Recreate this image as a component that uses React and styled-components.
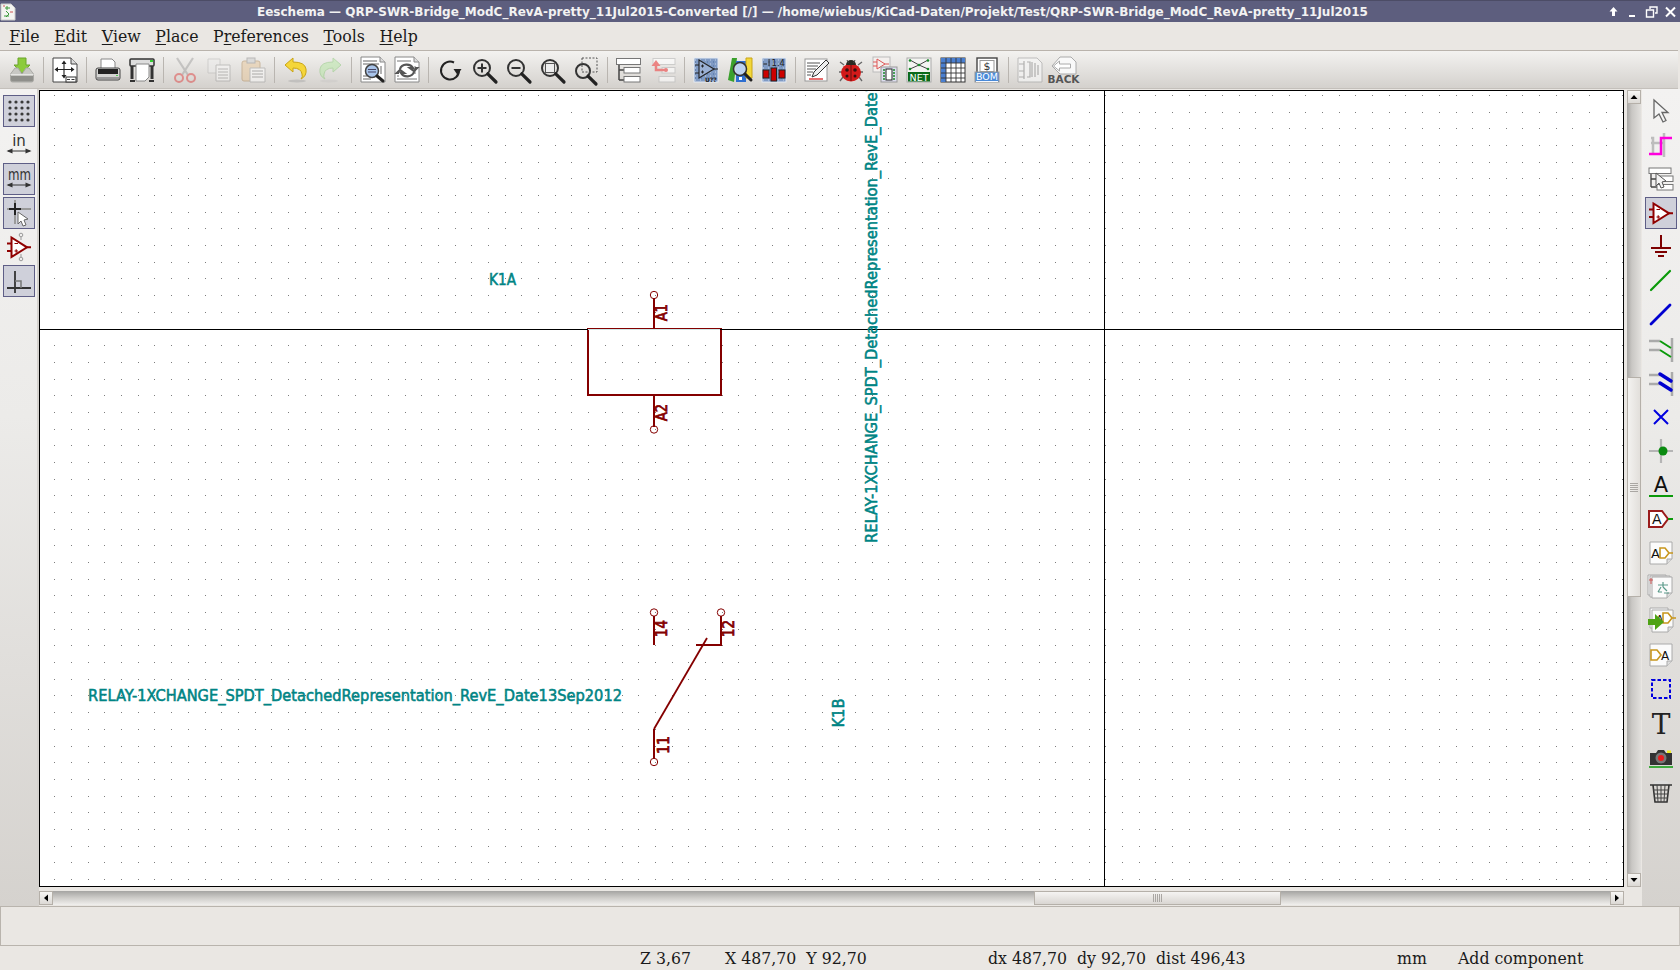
import React from "react";
import styled, { createGlobalStyle } from "styled-components";

const Global = createGlobalStyle`
  html, body { margin: 0; padding: 0; background: #eae7e3; overflow: hidden; }
  #root { width: 1680px; height: 970px; }
`;

const Win = styled.div`
  width: 1680px; height: 970px; display: flex; flex-direction: column;
  background: #eae7e3; overflow: hidden;
`;
const TitleBar = styled.div`
  height: 22px; flex: none; display: flex; align-items: center; background: #5d5e7e;
  border-top: 1px solid #4c4c66; box-sizing: border-box;
`;
const TitleIcon = styled.svg`width: 16px; height: 18px; flex: none; margin-left: 0;`;
const TitleText = styled.div`
  margin-left: 241px; font: bold 12px "DejaVu Sans", sans-serif; color: #f2f2f2;
  white-space: nowrap; flex: 1; letter-spacing: 0;
`;
const WinButtons = styled.div`display: flex; gap: 2px; padding-right: 1px;`;
const WinBtn = styled.svg`width: 17px; height: 16px; display: block;`;
const MenuBar = styled.div`
  height: 28px; flex: none; display: flex; align-items: center; padding-left: 2px; background: #eae7e3;
`;
const MenuItem = styled.span`
  padding: 0 7.3px; font: 15.75px "DejaVu Serif", serif; color: #1a1a1a;
  u { text-decoration-thickness: 1px; text-underline-offset: 2px; }
`;
const TopBar = styled.div`
  height: 39px; flex: none; box-sizing: border-box; display: flex; align-items: center; padding: 0 0 0 5px;
  margin-right: 2px; background: linear-gradient(#f3f2f0, #d4d1cd);
  border-top: 1px solid #b9b3ac; border-bottom: 1px solid #c4c0bb;
`;
const TopBtn = styled.div`width: 34px; height: 30px; display: flex; align-items: center; justify-content: center; flex: none;`;
const Sep = styled.div`
  width: 1px; height: 26px; flex: none; margin: 0 4px; background: #b9b5b0;
`;
const Icon = styled.svg`width: ${p => p.$s || 26}px; height: ${p => p.$s || 26}px; display: block; overflow: visible;`;
const Main = styled.div`flex: none; height: 817px; display: flex;`;
const SideBar = styled.div`
  flex: none; width: ${p => p.$w}px; box-sizing: border-box; display: flex; flex-direction: column; align-items: ${p => p.$right ? "flex-end" : "flex-start"};
  gap: 2px; padding: ${p => p.$right ? "6px 3px 0 0" : "6px 0 0 3px"};
  background: linear-gradient(#f3f2f1, #ecebe9 40%, #d5d2ce);
`;
const SideBtn = styled.div`
  width: 32px; height: 32px; box-sizing: border-box; flex: none; display: flex; align-items: center; justify-content: center;
  border: 1px solid ${p => p.$on ? "#5e5e86" : "transparent"};
  background: ${p => p.$on ? "#cfd0da" : "transparent"};
`;
const Center = styled.div`
  flex: 1; min-width: 0; box-sizing: border-box; padding: 1px 1px 1px 2px; display: grid;
  grid-template-columns: 1fr 14px; grid-template-rows: 1fr 14px; column-gap: 3px; row-gap: 4px;
  background: linear-gradient(to right, #d5d2ce 2px, #eae7e3 2px);
`;
const Canvas = styled.div`border: 1px solid #000; background: #fff; overflow: hidden; display: flex;`;
const Sheet = styled.svg`display: block; flex: none;`;
const SchText = styled.text`
  font-family: "DejaVu Sans", sans-serif; font-size: ${p => p.$size || 15}px;
  fill: ${p => p.$c}; stroke: ${p => p.$c}; stroke-width: ${p => p.$sw || 0.55}px;
`;
const VScroll = styled.div`
  position: relative; background: linear-gradient(to right, #a8a6a3, #c9c7c4 35%, #e2e0dd);
  display: flex; flex-direction: column; justify-content: space-between;
`;
const HScroll = styled.div`
  position: relative; background: linear-gradient(#a5a4a2, #cfcdca 50%, #f0efed);
  display: flex; justify-content: space-between; margin-right: 0;
`;
const ArrowBtn = styled.div`
  width: 14px; height: 14px; box-sizing: border-box; border: 1px solid #b5b0a9; background: linear-gradient(#f7f6f4, #dcd9d5);
  display: flex; align-items: center; justify-content: center; position: relative; z-index: 1;
`;
const Tri = styled.svg`width: 8px; height: 8px; display: block;`;
const Thumb = styled.div`
  position: absolute; box-sizing: border-box; border: 1px solid #b5b0a9;
  display: flex; align-items: center; justify-content: center;
  ${p => p.$v
    ? `left: 0; right: 0; top: 287px; height: 220px; background: linear-gradient(to right, #f3f2f0, #e2dfdb);`
    : `top: 0; bottom: 0; left: 995px; width: 247px; background: linear-gradient(#f5f4f2, #d9d6d2);`}
`;
const Grip = styled.div`
  ${p => p.$v
    ? `width: 8px; height: 9px; background: repeating-linear-gradient(#aaa7a3 0 1px, transparent 1px 2px);`
    : `width: 9px; height: 8px; background: repeating-linear-gradient(to right, #aaa7a3 0 1px, transparent 1px 2px);`}
`;
const Message = styled.div`
  height: 40px; flex: none; box-sizing: border-box; border: 1px solid #b9b4ad; border-right-color: #c8c4be; background: #eae7e3;
`;
const Status = styled.div`
  flex: 1; display: grid; align-items: center; grid-template-columns: 640px 85px 263px 409px 61px 1fr;
  font: 17.5px "DejaVu Serif Condensed", "DejaVu Serif", serif; font-stretch: condensed; color: #1a1a1a; white-space: nowrap;
`;
const Cell = styled.span`display: block;`;
const IconLabel = styled.text`
  font-family: ${p => p.$font || '"DejaVu Sans"'}, sans-serif; font-size: ${p => p.$size}px; font-weight: ${p => p.$w || 400}; fill: ${p => p.$c || "#333"};
`;

const I = ({ children, s }) => <Icon $s={s} viewBox="0 0 26 26">{children}</Icon>;

const Doc = ({ x = 2, y = 1, w = 22, h = 24, f = 5, stroke = "#888" }) => (
  <g>
    <path d={`M${x} ${y}H${x + w - f}L${x + w} ${y + f}V${y + h}H${x}Z`} fill="#fff" stroke={stroke} />
    <path d={`M${x + w - f} ${y}V${y + f}H${x + w}`} fill="#ddd" stroke={stroke} />
  </g>
);
const Mag = ({ cx = 11, cy = 11, r = 8 }) => (
  <g fill="none">
    <circle cx={cx} cy={cy} r={r} stroke="#333" strokeWidth="2" />
    <path d={`M${cx + r * 0.72} ${cy + r * 0.72}L${cx + r + 6} ${cy + r + 6}`} stroke="#222" strokeWidth="3.2" strokeLinecap="round" />
  </g>
);
const Amp = ({ c = "#900000", fill = "#fff", op = 1 }) => (
  <g opacity={op}>
    <path d="M1 9.5H6M1 17H6M20 13.3H25" stroke={c} strokeWidth="2" />
    <path d="M5.5 3.5V23L21 13.3Z" fill={fill} stroke={c} strokeWidth="2" />
    <path d="M8.5 9.5H12M8.5 17H12M10.2 15.2V18.8" stroke={c} strokeWidth="1.1" fill="none" />
  </g>
);
const Speckle = () => (
  <g>
    <rect x="1" y="1" width="24" height="24" fill="#7f9ac4" stroke="#e6ebf4" />
    <path d="M2 3h22M2 7h22M2 11h22M2 15h22M2 19h22M2 23h22" stroke="#c9d5e8" strokeDasharray="1 4" />
    <path d="M2 5h22M2 9h22M2 13h22M2 17h22M2 21h22" stroke="#4f6c9c" strokeDasharray="1 5" />
  </g>
);

const topIcons = {
  load: <I><path d="M9 1h8v7h4l-8 8-8-8h4z" fill="#8ccb3c" stroke="#6aa52a" /><path d="M1.5 17L6 11H9l4 6 4-6h3l4.5 6v6q0 2-2 2h-19q-2 0-2-2z" fill="#c8c8c4" stroke="#a9a9a5" /><path d="M2 19h22v4q0 1.500-1.500 1.500h-19Q2 24.500 2 23z" fill="#8f8f8b" /><path d="M1.500 17.500h23" stroke="#e6e6e4" /></I>,
  page: <I><Doc x={1} y={1} w={24} h={24} f={6} stroke="#444" /><path d="M12 5V20M4 12.500H21" stroke="#222" strokeWidth="1.100" /><path d="M12 3.500l-2.500 3.500h5zM12 21.500l-2.500-3.500h5zM2.500 12.500l3.500-2.500v5zM22.500 12.500l-3.500-2.500v5z" fill="#222" /><rect x="14" y="20" width="10" height="5" fill="#fff" stroke="#333" /><path d="M15 22.500h3M19.500 22.500h3" stroke="#333" /></I>,
  print: <I><path d="M6 2h11l3 3v8H6z" fill="#fff" stroke="#888" /><path d="M1 13q0-2 2-2h20q2 0 2 2v8q0 2-2 2H3q-2 0-2-2z" fill="#d4d4d2" stroke="#444" /><rect x="3" y="12" width="20" height="5" fill="#222" /><rect x="2" y="20" width="22" height="2" fill="#999" /><rect x="21" y="18" width="2" height="1" fill="#5c5" /></I>,
  plot: <I><rect x="1" y="2" width="24" height="7" rx="1" fill="#ddd" stroke="#333" strokeWidth="1.500" /><path d="M7 7h13v13l-4 4H7z" fill="#fff" stroke="#888" /><path d="M3 9v13M23 9v13" stroke="#333" strokeWidth="3" /><path d="M1 24h5M20 24h5" stroke="#333" strokeWidth="2" /><rect x="21" y="3" width="3" height="2" fill="#3c3" /></I>,
  cut: <I><g opacity="0.45"><path d="M5 1L16 18M21 1L10 18" stroke="#999" strokeWidth="2.200" /><circle cx="7" cy="21" r="4" fill="none" stroke="#d33" strokeWidth="2" /><circle cx="19" cy="21" r="4" fill="none" stroke="#d33" strokeWidth="2" /></g></I>,
  copy: <I><g opacity="0.4"><path d="M2 2h12v14H2z" fill="#eee" stroke="#aaa" /><path d="M10 8h14v16H10z" fill="#fff" stroke="#888" /><path d="M12 12h10M12 15h10M12 18h10M12 21h10" stroke="#777" /></g></I>,
  paste: <I><g opacity="0.5"><rect x="2" y="4" width="18" height="20" rx="2" fill="#e8c79a" stroke="#b08a5a" /><rect x="7" y="1" width="8" height="5" fill="#ccc" stroke="#888" /><path d="M10 11h15v14H10z" fill="#fff" stroke="#999" /><path d="M12 14h11M12 17h11M12 20h11" stroke="#777" /></g></I>,
  undo: <I><ellipse cx="14" cy="24" rx="9" ry="1.500" fill="#aaa" opacity=".5" /><path d="M10 1L2 8l8 7v-4q8 0 9 6 1 3-1 5 6-3 5-10-1-7-13-7z" fill="#f5d63a" stroke="#c9a516" /></I>,
  redo: <I><g opacity="0.5"><ellipse cx="12" cy="24" rx="9" ry="1.500" fill="#bbb" opacity=".5" /><path d="M16 1l8 7-8 7v-4q-8 0-9 6-1 3 1 5-6-3-5-10 1-7 13-7z" fill="#b6e8a4" stroke="#8ac878" /></g></I>,
  find: <I><Doc x={1} y={0} w={24} h={25} f={5} /><path d="M3 4h14M3 7h16M3 19h4M3 22h8M21 9v8" stroke="#666" /><circle cx="12" cy="14" r="6.500" fill="#a8c4ea" stroke="#444" strokeWidth="1.500" /><path d="M8 12.500h8M8 15h8" stroke="#446" /><path d="M17 19l6 5" stroke="#222" strokeWidth="3" strokeLinecap="round" /></I>,
  repl: <I><Doc x={1} y={0} w={24} h={25} f={5} /><path d="M3 4h14M3 22h20M3 19h2M21 9v8" stroke="#777" /><path d="M6 12a7 6 0 0 1 13-1l-3 0 4 3 3-3h-2" fill="none" stroke="#555" strokeWidth="2.200" /><path d="M20 15a7 6 0 0 1-13 1l3 0-4-3-3 3h2" fill="none" stroke="#555" strokeWidth="2.200" /></I>,
  redraw: <I><path d="M17 5.500A9 9 0 1 0 22 13" fill="none" stroke="#222" strokeWidth="2" /><path d="M17.500 13h8l-4 6z" fill="#222" transform="translate(-1 -1)" /></I>,
  zin: <I><Mag /><path d="M6.500 11h9M11 6.500v9" stroke="#333" strokeWidth="2" /></I>,
  zout: <I><Mag /><path d="M6.500 11h9" stroke="#333" strokeWidth="2" /></I>,
  zfit: <I><Mag /><rect x="6.500" y="6.500" width="9" height="9" fill="#eee" stroke="#555" /></I>,
  zsel: <I><Mag cx={10} cy={14} r={7} /><rect x="9" y="1" width="15" height="14" fill="none" stroke="#555" strokeDasharray="2 1.500" /></I>,
  hier: <I><path d="M3 6v17M3 13h5M3 23h5" fill="none" stroke="#444" strokeWidth="1.500" /><rect x="0.500" y="1.500" width="24" height="6" fill="#fff" stroke="#777" /><rect x="8" y="10.500" width="16" height="5.500" fill="#fff" stroke="#777" /><rect x="8" y="19.500" width="16" height="5.500" fill="#fff" stroke="#777" /></I>,
  leave: <I><g opacity="0.6"><rect x="3" y="1.500" width="22" height="6" fill="#fff" stroke="#bbb" /><rect x="12" y="10.500" width="13" height="5.500" fill="#fff" stroke="#bbb" /><rect x="9" y="19.500" width="16" height="5.500" fill="#fff" stroke="#bbb" /><path d="M6 8v5h10" fill="none" stroke="#e44" strokeWidth="2.500" /><path d="M6 3l-4.500 6h9z" fill="#e44" /><circle cx="16" cy="13" r="2" fill="#e44" /></g></I>,
  lib: <I><Speckle /><path d="M6 3v18l15-9z" fill="#9ab0d4" stroke="#222" strokeWidth="1.100" /><path d="M8 9h3M8 15h3M9.500 13.500v3M9.500 7.500v3M2 8h4M2 16h4M21 12h4" stroke="#222" fill="none" /><IconLabel x="12" y="24.500" $size="6" $w="700" $c="#222">U??</IconLabel></I>,
  libv: <I><path d="M1 23L5 1h5L7 25z" fill="#3aa02c" /><path d="M9 4h10v21H9z" fill="#2f6fd0" /><path d="M19 1h6v20h-6z" fill="#f2d73a" stroke="#c9a516" /><circle cx="13" cy="12" r="6.500" fill="#d6e4f4" fillOpacity=".85" stroke="#333" strokeWidth="1.500" /><path d="M18 17l6 6" stroke="#222" strokeWidth="3" strokeLinecap="round" /><rect x="12" y="20" width="3" height="3" fill="#fff" /></I>,
  mod: <I><Speckle /><rect x="2" y="13" width="6" height="8" fill="#c00" stroke="#222" /><rect x="10" y="11" width="5.500" height="13" fill="#c00" stroke="#222" /><rect x="18" y="13" width="6" height="8" fill="#c00" stroke="#222" /><path d="M2 7h4M8 2v7" stroke="#222" /><IconLabel x="10.500" y="9" $size="8.500" $c="#222">1.4</IconLabel></I>,
  edit: <I><rect x="1" y="2" width="22" height="22" fill="#fff" stroke="#999" /><path d="M3 6h13M3 9h11M3 12h9M3 15h6M3 18h4" stroke="#555" /><path d="M22 3l3 3-12 12-5 2 2-5z" fill="#eee" stroke="#333" /><path d="M5 22h14" stroke="#d22" strokeWidth="1.300" /></I>,
  bug: <I><path d="M6 8L2 5M20 8l4-3M4 15H1M22 15h3M5 20l-3 4M21 20l3 4" stroke="#666" strokeWidth="1.300" /><ellipse cx="13" cy="15.500" rx="10" ry="9" fill="#d21a1a" /><path d="M8 8a5 5 0 0 1 10 0z" fill="#2a2a22" /><path d="M9 3l1.500 3M17 3l-1.500 3" stroke="#444" /><path d="M13 8v16" stroke="#611" /><circle cx="9" cy="13" r="1.800" fill="#311" /><circle cx="17" cy="13" r="1.800" fill="#311" /><circle cx="9" cy="19" r="1.500" fill="#311" /><circle cx="17" cy="19" r="1.500" fill="#311" /></I>,
  cvpcb: <I><rect x="1" y="0" width="17" height="15" fill="#f4f0ee" stroke="#bbb" /><path d="M5 2v10l8-5zM1 5h4M1 9h4M13 7h4" fill="none" stroke="#d55" /><rect x="9" y="10" width="16" height="15" fill="#dde" stroke="#999" /><rect x="14" y="12" width="6" height="11" fill="#fff" stroke="#222" /><path d="M11 13h2M11 16h2M11 19h2M11 22h2M21 13h2M21 16h2M21 19h2M21 22h2" stroke="#1a8a2a" strokeWidth="1.500" /></I>,
  net: <I><rect x="1" y="1" width="24" height="24" fill="#f4f4f2" stroke="#aaa" /><path d="M4 3l9 5 9-5M4 12l9-4 9 4" fill="none" stroke="#444" /><circle cx="4" cy="3.500" r="1.300" fill="#1a8a2a" /><circle cx="22" cy="3.500" r="1.300" fill="#1a8a2a" /><circle cx="13" cy="8" r="1.300" fill="#1a8a2a" /><circle cx="4" cy="12" r="1.300" fill="#1a8a2a" /><circle cx="22" cy="12" r="1.300" fill="#1a8a2a" /><rect x="2" y="15" width="22" height="9.500" fill="#0b6a1a" /><IconLabel x="13" y="23.500" textAnchor="middle" $size="9.500" $w="400" $c="#fff">NET</IconLabel></I>,
  table: <I><rect x="1" y="1" width="24" height="24" fill="#fff" stroke="#333" /><path d="M1 1h24v5H1zM1 1h5v24H1z" fill="#4a7fd0" /><path d="M1 6h24M1 11h24M1 16h24M1 21h24M6 1v24M11 1v24M16 1v24M21 1v24" stroke="#333" strokeWidth="0.900" /></I>,
  bom: <I><rect x="3" y="1" width="20" height="15" fill="#fff" stroke="#444" strokeWidth="1.400" /><rect x="6" y="3.500" width="14" height="11" fill="none" stroke="#999" /><IconLabel x="13" y="13" textAnchor="middle" $size="11" $c="#333">$</IconLabel><rect x="1" y="15" width="24" height="10" fill="#4a8ad8" stroke="#999" /><IconLabel x="13" y="23" textAnchor="middle" $size="9.500" $c="#fff" textDecoration="underline">BOM</IconLabel></I>,
  imp: <I><g opacity="0.7"><path d="M1 1h19l5 5v19H1z" fill="#f6f6f6" stroke="#aaa" /><path d="M7 4v18M10 5h3v15h-3M15 5v15M18 6v14M21 8v10M2 7h5M2 14h5M2 20h5" stroke="#999" fill="none" strokeWidth="1.200" /></g></I>,
  back: <I><path d="M9 0h11l5 5v12H9l-8-8z" fill="#f9f9f9" stroke="#aaa" /><path d="M2.500 9l6-5v3h11v4h-11v3z" fill="#fff" stroke="#aaa" /><IconLabel x="12.500" y="26" textAnchor="middle" $size="10.500" $w="700" $c="#555">BACK</IconLabel></I>,
};

const topLayout = [
  ["load"], 0, ["page"], 0, ["print"], ["plot"], 0, ["cut"], ["copy"], ["paste"], 0, ["undo"], ["redo"], 0,
  ["find"], ["repl"], 0, ["redraw"], ["zin"], ["zout"], ["zfit"], ["zsel"], 0, ["hier"], ["leave"], 0,
  ["lib"], ["libv"], ["mod"], 0, ["edit"], ["bug"], ["cvpcb"], ["net"], ["table"], ["bom"], 0, ["imp"], ["back"],
];

const leftIcons = [
  { on: true, el: <I>{[3, 9, 15, 21].flatMap(y => [4, 10, 16, 22].map(x => <circle key={x + "-" + y} cx={x} cy={y + 1} r="1.600" fill="#3a3a3a" />))}</I> },
  { el: <I><IconLabel x="13" y="14" textAnchor="middle" $size="15" $c="#333">in</IconLabel><path d="M2 19h22" stroke="#333" /><path d="M0.500 19l6-2.500v5zM25.500 19l-6-2.500v5z" fill="#333" /></I> },
  { on: true, el: <I><IconLabel x="2" y="14" textLength="23" lengthAdjust="spacingAndGlyphs" $size="15" $c="#333">mm</IconLabel><path d="M2 19h22" stroke="#333" /><path d="M0.500 19l6-2.500v5zM25.500 19l-6-2.500v5z" fill="#333" /></I> },
  { on: true, el: <I><path d="M1 9h24M9 0v24" stroke="#9a9a9a" strokeWidth="2" /><path d="M3 9h12M9 3v12" stroke="#222" strokeWidth="2" /><path d="M12 12v12l3-3 2 5 3-1-2-5 4-1z" fill="#fff" stroke="#666" /></I> },
  { el: <I><circle cx="15" cy="1" r="1.800" fill="none" stroke="#999" /><circle cx="15" cy="25" r="1.800" fill="none" stroke="#999" /><path d="M15 3v3M15 20v3" stroke="#999" /><Amp /></I> },
  { on: true, el: <I><path d="M1 20h24M9 3v22" stroke="#333" strokeWidth="1.800" /><path d="M9 13h6v7" fill="none" stroke="#777" strokeWidth="1.500" /></I> },
];

const label = (x, ch, c = "#222", y = 18, fs = 13) => <IconLabel x={x} y={y} $size={fs} $c={c}>{ch}</IconLabel>;
const Leaf = ({ x = 2, y = 2, w = 22, h = 22 }) => (
  <g><path d={`M${x} ${y}H${x + w}V${y + h - 5}L${x + w - 5} ${y + h}H${x}Z`} fill="#fbfbfb" stroke="#aaa" /><path d={`M${x + w} ${y + h - 5}H${x + w - 5}V${y + h}`} fill="#ddd" stroke="#aaa" /></g>
);
const Dee = ({ x = 12, y = 8 }) => <path d={`M${x} ${y}h5l4 5-4 5h-5zM${x + 9} ${y + 5}h4`} fill="#fff" stroke="#c8961e" strokeWidth="1.600" />;

const rightIcons = [
  { el: <I><path d="M6 2v18l5-4 4 8 3-1.500-4-8h6z" fill="#f4f4f4" stroke="#666" strokeWidth="1.300" /></I> },
  { el: <I><path d="M3 6h2v16M16 1v24M3 11h12" stroke="#bdbdbd" strokeWidth="2.500" fill="none" /><path d="M24 6H13v16H1" fill="none" stroke="#ff00dd" strokeWidth="2.500" /></I> },
  { el: <I><path d="M3 6v15M3 13h6M3 21h6" fill="none" stroke="#444" strokeWidth="1.300" /><rect x="1" y="2" width="22" height="5.500" fill="#fff" stroke="#777" /><rect x="9" y="10" width="16" height="5.500" fill="#fff" stroke="#777" /><rect x="9" y="18.500" width="16" height="5.500" fill="#fff" stroke="#777" /><path d="M8 7v13l3-3 2 5 3-1-2-5 4-1z" fill="#f4f4f4" stroke="#555" /></I> },
  { on: true, el: <I><Amp /></I> },
  { el: <I><path d="M13 1v13M3 14h20M7 18h12M10 22h6" stroke="#7d0000" strokeWidth="2" /></I> },
  { el: <I><path d="M3 22L22 3" stroke="#0a9a0a" strokeWidth="2.200" strokeLinecap="round" /></I> },
  { el: <I><path d="M3 22L22 3" stroke="#0000d0" strokeWidth="2.800" strokeLinecap="round" /></I> },
  { el: <I><path d="M1 5h11M1 14h11M24 2v24" stroke="#aaa" strokeWidth="2.500" /><path d="M12 5l11 7M12 14l11 7" stroke="#0a9a0a" strokeWidth="2" /></I> },
  { el: <I><path d="M1 5h11M1 14h11M24 2v24" stroke="#aaa" strokeWidth="2.500" /><path d="M12 4l11 7M12 13l11 7" stroke="#0000d0" strokeWidth="3.500" strokeLinecap="round" /></I> },
  { el: <I><path d="M6 6l14 14M20 6L6 20" stroke="#0000e0" strokeWidth="2" /></I> },
  { el: <I><path d="M1 13h24M13 1v24" stroke="#b5b5b5" strokeWidth="2.200" /><circle cx="15" cy="13" r="4.500" fill="#0a8a10" /></I> },
  { el: <I><IconLabel x="13" y="20" textAnchor="middle" $size="21" $c="#111">A</IconLabel><path d="M1 24h24" stroke="#0a9a0a" strokeWidth="2" /></I> },
  { el: <I><path d="M1 5h13l6 8-6 8H1z" fill="#fff" stroke="#9a1c1c" strokeWidth="2" /><path d="M20 13h5" stroke="#0a9a0a" strokeWidth="2" />{label(4, "A", "#111", 18, 14)}</I> },
  { el: <I><Leaf />{label(3, "A", "#111", 18, 13)}<Dee /></I> },
  { el: <I><Leaf x={0} y={1} w={18} h={20} /><Leaf x={2} y={2} w={20} h={21} /><Leaf x={4} y={3} w={20} h={21} /><path d="M1 6h4M3 4v6" stroke="#c55" /><path d="M15 8v5M10 11h10M13 13l-3 5M15 13l4 4M10 18h4M16 19h5" stroke="#5a9a8a" strokeWidth="1.200" /></I> },
  { el: <I><Leaf x={2} y={0} w={18} h={20} /><Leaf x={4} y={2} w={21} h={22} />{label(8, "A", "#111", 15, 11)}<Dee x={15} y={5} /><path d="M0 11h7V6l9 8-9 8v-5H0z" fill="#4ea214" /></I> },
  { el: <I><Leaf /><path d="M3 8h6l4 5-4 5H3z" fill="#fff" stroke="#c8961e" strokeWidth="1.600" />{label(13, "A", "#111", 18, 12)}</I> },
  { el: <I><rect x="4" y="4" width="18" height="18" fill="none" stroke="#0000e0" strokeWidth="2" strokeDasharray="3.500 2" /></I> },
  { el: <I><IconLabel x="13" y="24" textAnchor="middle" $size="28" $w="400" $c="#222" $font='"DejaVu Serif"'>T</IconLabel></I> },
  { el: <I><path d="M2 9h6l2-3h6l2 3h6v12H2z" fill="#333" /><rect x="19" y="6.500" width="4" height="2.500" fill="#ee2" /><circle cx="13" cy="14" r="5.500" fill="#777" /><circle cx="13" cy="14" r="3" fill="#e81c1c" /><path d="M1 23h24" stroke="#0a9a0a" strokeWidth="1.500" /></I> },
  { el: <I><ellipse cx="13" cy="4.500" rx="8" ry="2" fill="#ddd" /><path d="M2 7h22M5 7l2 17h12l2-17" fill="none" stroke="#333" strokeWidth="1.600" /><path d="M9 7l1 17M13 7v17M17 7l-1 17M5 12h16M6 16h14M6 20h14" stroke="#444" /></I> },
];

function gridPath() {
  let d = "";
  for (let i = 0; i < 96; i++) {
    const x = Math.round(54.4 + 16.68 * i);
    for (let j = 0; j < 48; j++) {
      const y = Math.round(95 + 16.68 * j);
      d += `M${x} ${y}h1v1h-1z`;
    }
  }
  return d;
}
const GRID = gridPath();
const TEAL = "#008484";
const RED = "#840000";
const LONG = "RELAY-1XCHANGE_SPDT_DetachedRepresentation_RevE_Date13Sep2012";

const PinText = ({ x, y, len, children }) => (
  <SchText $c={RED} $sw={0.8} x={x} y={y} textLength={len} lengthAdjust="spacingAndGlyphs" transform={`rotate(-90 ${x} ${y})`}>{children}</SchText>
);

function Schematic() {
  return (
    <Sheet width="1583" height="795" viewBox="40 91 1583 795">
      <path d={GRID} fill="#7d7d7d" shapeRendering="crispEdges" />
      <g shapeRendering="crispEdges">
        <path d="M40 329.500H1623M1104.500 91V886" stroke="#000" strokeWidth="1" />
        <path d="M587.500 329.500H720" stroke="#cfe8e8" strokeWidth="1" />
        <g fill="none" stroke={RED} strokeWidth="2">
          <path d="M587.500 330V395H720.500V330" />
          <path d="M654 298V328M654 396V427" />
          <path d="M654 616V645M721 616V645H696M654 729V758" />
        </g>
        <path d="M586.500 328.500H721.500" stroke={RED} strokeWidth="1.500" />
      </g>
      <path d="M654 729L707 638" stroke={RED} strokeWidth="1.800" fill="none" />
      <g fill="none" stroke={RED} strokeWidth="1">
        <circle cx="654" cy="295" r="3.700" />
        <circle cx="654" cy="429.500" r="3.700" />
        <circle cx="654" cy="612.500" r="3.700" />
        <circle cx="721" cy="612.500" r="3.700" />
        <circle cx="654" cy="762" r="3.700" />
      </g>
      <PinText x="666.500" y="321" len="17">A1</PinText>
      <PinText x="666.500" y="421" len="17">A2</PinText>
      <PinText x="666.500" y="637" len="17">14</PinText>
      <PinText x="734" y="637" len="17">12</PinText>
      <PinText x="668.500" y="754" len="18">11</PinText>
      <SchText $c={TEAL} x="489" y="285" textLength="27" lengthAdjust="spacingAndGlyphs">K1A</SchText>
      <SchText $c={TEAL} x="844" y="727.500" textLength="29" lengthAdjust="spacingAndGlyphs" transform="rotate(-90 844 727.500)">K1B</SchText>
      <SchText $c={TEAL} x="88" y="701" textLength="534" lengthAdjust="spacingAndGlyphs">{LONG}</SchText>
      <SchText $c={TEAL} x="876.500" y="543" textLength="534" lengthAdjust="spacingAndGlyphs" transform="rotate(-90 876.500 543)">{LONG}</SchText>
    </Sheet>
  );
}

const menus = [["F", "ile"], ["E", "dit"], ["V", "iew"], ["P", "lace"], ["P", "r", "eferences"], ["T", "ools"], ["H", "elp"]];

export default function App() {
  return (
    <Win>
      <Global />
      <TitleBar>
        <TitleIcon viewBox="0 0 16 18">
          <path d="M1 1h10l4 4v12H1z" fill="#f4f4f0" stroke="#ccc" />
          <path d="M7 3v4M5 5h5M6 8l3 3-3 3M4 13h5" stroke="#3a9a3a" fill="none" />
          <path d="M3 3h2M10 9h3" stroke="#c55" />
        </TitleIcon>
        <TitleText>Eeschema — QRP-SWR-Bridge_ModC_RevA-pretty_11Jul2015-Converted [/] — /home/wiebus/KiCad-Daten/Projekt/Test/QRP-SWR-Bridge_ModC_RevA-pretty_11Jul2015</TitleText>
        <WinButtons>
          <WinBtn viewBox="0 0 17 16"><path d="M8.500 3l4 4.500h-2.500V12H7V7.500H4.500z" fill="#fff" /></WinBtn>
          <WinBtn viewBox="0 0 17 16"><path d="M5 11h6v2H5z" fill="#fff" /></WinBtn>
          <WinBtn viewBox="0 0 17 16"><path d="M7 5V3h7v6h-2M3.500 6h7v7h-7z" fill="none" stroke="#fff" strokeWidth="1.400" /></WinBtn>
          <WinBtn viewBox="0 0 17 16"><path d="M4 3.500l9 9M13 3.500l-9 9" stroke="#fff" strokeWidth="2" /></WinBtn>
        </WinButtons>
      </TitleBar>
      <MenuBar>
        {menus.map((m, i) => (
          <MenuItem key={i}>
            {m.length === 3 ? <>{m[0]}<u>{m[1]}</u>{m[2]}</> : <><u>{m[0]}</u>{m[1]}</>}
          </MenuItem>
        ))}
      </MenuBar>
      <TopBar>
        {topLayout.map((it, i) => it === 0 ? <Sep key={i} /> : <TopBtn key={i}>{topIcons[it[0]]}</TopBtn>)}
      </TopBar>
      <Main>
        <SideBar $w={37}>
          {leftIcons.map((b, i) => <SideBtn key={i} $on={b.on}>{b.el}</SideBtn>)}
        </SideBar>
        <Center>
          <Canvas><Schematic /></Canvas>
          <VScroll>
            <ArrowBtn><Tri viewBox="0 0 8 8"><path d="M4 2l3.500 4h-7z" fill="#000" /></Tri></ArrowBtn>
            <Thumb $v><Grip $v /></Thumb>
            <ArrowBtn><Tri viewBox="0 0 8 8"><path d="M4 6L7.500 2h-7z" fill="#000" /></Tri></ArrowBtn>
          </VScroll>
          <HScroll>
            <ArrowBtn><Tri viewBox="0 0 8 8"><path d="M2 4l4-3.500v7z" fill="#000" /></Tri></ArrowBtn>
            <Thumb><Grip /></Thumb>
            <ArrowBtn><Tri viewBox="0 0 8 8"><path d="M6 4L2 .5v7z" fill="#000" /></Tri></ArrowBtn>
          </HScroll>
        </Center>
        <SideBar $w={38} $right>
          {rightIcons.map((b, i) => <SideBtn key={i} $on={b.on}>{b.el}</SideBtn>)}
        </SideBar>
      </Main>
      <Message />
      <Status>
        <Cell />
        <Cell>Z 3,67</Cell>
        <Cell>X 487,70&nbsp;&nbsp;Y 92,70</Cell>
        <Cell>dx 487,70&nbsp;&nbsp;dy 92,70&nbsp;&nbsp;dist 496,43</Cell>
        <Cell>mm</Cell>
        <Cell>Add component</Cell>
      </Status>
    </Win>
  );
}
